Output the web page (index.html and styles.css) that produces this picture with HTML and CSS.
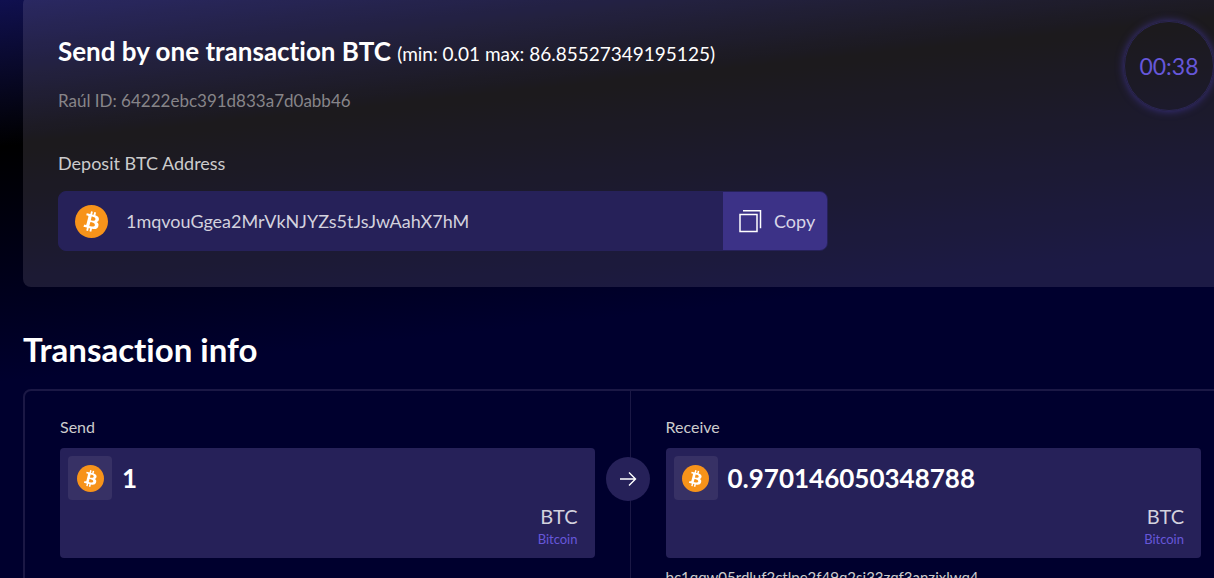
FILE: index.html
```html
<!DOCTYPE html>
<html lang="en">
<head>
  <meta charset="UTF-8">
  <meta name="viewport" content="width=device-width, initial-scale=1.0">
  <title>Send BTC</title>
  <link rel="stylesheet" href="styles.css">
</head>
<body>
  <!-- Shared coin logo -->
  <svg class="sprite" aria-hidden="true">
    <symbol id="btc" viewBox="0 0 32 32">
      <circle cx="16" cy="16" r="16" fill="#f7931a"/>
      <path fill="#fff" d="M23.189 14.02c.314-2.096-1.283-3.223-3.465-3.975l.708-2.84-1.728-.43-.69 2.765c-.454-.114-.92-.22-1.385-.326l.695-2.783L15.596 6l-.708 2.839c-.376-.086-.746-.17-1.104-.26l.002-.009-2.384-.595-.46 1.846s1.283.294 1.256.312c.7.175.826.638.805 1.006l-.806 3.235c.048.012.11.03.18.057l-.183-.045-1.13 4.532c-.086.212-.303.531-.793.41.018.025-1.256-.313-1.256-.313l-.858 1.978 2.25.561c.418.105.828.215 1.231.318l-.715 2.872 1.727.43.708-2.84c.472.127.93.245 1.378.357l-.706 2.828 1.728.43.715-2.866c2.948.558 5.164.333 6.097-2.333.752-2.146-.037-3.385-1.588-4.192 1.13-.26 1.98-1.003 2.207-2.538zm-3.95 5.538c-.533 2.147-4.148.986-5.32.695l.95-3.805c1.172.293 4.929.872 4.37 3.11zm.535-5.569c-.487 1.953-3.495.96-4.47.717l.86-3.45c.975.243 4.118.696 3.61 2.733z"/>
    </symbol>
  </svg>

  <main class="page">
    <section class="card">
      <div class="card-info">
        <h1 class="title">Send by one transaction BTC <span class="limits">(min: 0.01 max: 86.85527349195125)</span></h1>
        <p class="order-id">Raúl ID: 64222ebc391d833a7d0abb46</p>
        <p class="address-label">Deposit BTC Address</p>
        <div class="address">
          <svg class="address-icon"><use href="#btc"/></svg>
          <span class="address-value">1mqvouGgea2MrVkNJYZs5tJsJwAahX7hM</span>
          <button class="copy" type="button">
            <svg class="copy-icon" viewBox="0 0 24 24" fill="none" stroke="#fff" stroke-width="1.500">
              <path d="M2 5.500h17v17H2z"/>
              <path d="M5 1.800h17.500v17.500"/>
            </svg>
            Copy
          </button>
        </div>
      </div>
      <div class="timer">00:38</div>
    </section>

    <h2 class="section-title">Transaction info</h2>

    <section class="exchange">
      <div class="side side-send">
        <h3 class="side-label">Send</h3>
        <div class="amount-box">
          <div class="amount">
            <span class="coin"><svg class="coin-icon"><use href="#btc"/></svg></span>
            1
          </div>
          <div class="currency">BTC</div>
          <div class="currency-name">Bitcoin</div>
        </div>
        <span class="arrow">
          <svg class="arrow-icon" viewBox="0 0 18 16" fill="none" stroke="#fff" stroke-width="1.4">
            <path d="M1 8h15.500M10 1.500L16.500 8L10 14.500"/>
          </svg>
        </span>
      </div>
      <div class="side side-receive">
        <h3 class="side-label">Receive</h3>
        <div class="amount-box">
          <div class="amount">
            <span class="coin"><svg class="coin-icon"><use href="#btc"/></svg></span>
            0.970146050348788
          </div>
          <div class="currency">BTC</div>
          <div class="currency-name">Bitcoin</div>
        </div>
        <p class="wallet">bc1qqw05rdluf2ctlpe2f49q2sj33zqf3anzjxlwq4</p>
      </div>
    </section>
  </main>
</body>
</html>
```
FILE: styles.css
```css
* {
  margin: 0;
  padding: 0;
  box-sizing: border-box;
}

body {
  font-family: Lato, sans-serif;
  font-variant-ligatures: none;
  color: #fff;
  background: linear-gradient(174deg, #10104f, #000 146px, #00002e 380px) #00002e;
  height: 100vh;
  overflow: hidden;
}

.sprite {
  display: none;
}

/* runs past the right edge of the window */
.page {
  margin: -4px -24px 0 23px;
}

.card {
  display: flex;
  justify-content: space-between;
  align-items: flex-start;
  padding: 24px 24px 36px 35px;
  border-radius: 8px;
  background: rgba(245, 228, 255, 0.115);
}

.card-info {
  flex: 0 1 770px;
  padding-top: 14px;
}

.title {
  font-size: 26px;
  line-height: 34px;
  font-weight: 700;
}

.limits {
  font-size: 19px;
  font-weight: 400;
}

.order-id {
  margin-top: 18px;
  font-size: 17px;
  line-height: 24px;
  color: #878589;
}

.address-label {
  margin-top: 38px;
  font-size: 18px;
  line-height: 24px;
  color: #ccc;
}

.address {
  display: flex;
  align-items: center;
  height: 60px;
  margin-top: 16px;
  border: 1px solid #262159;
  border-radius: 8px;
  background: #262159;
  overflow: hidden;
}

.address-icon {
  width: 33px;
  height: 33px;
  margin: 0 18px 0 16px;
}

.address-value {
  flex: 1;
  font-size: 18px;
  color: #d3d2de;
}

.copy {
  display: flex;
  align-items: center;
  gap: 12px;
  height: 100%;
  width: 104px;
  padding-left: 15px;
  border: none;
  background: #3c3287;
  color: #d8d6e7;
  font-family: inherit;
  font-size: 18px;
  cursor: pointer;
}

.copy-icon {
  width: 24px;
  height: 24px;
}

.timer {
  flex: none;
  width: 90px;
  height: 90px;
  margin-top: 1px;
  border: 1px solid #2b2654;
  border-radius: 50%;
  box-shadow: 0 0 8px #3c3287;
  text-align: center;
  font-size: 23px;
  line-height: 88px;
  color: #6657d9;
}

.section-title {
  margin-top: 40px;
  font-size: 33px;
  line-height: 44px;
  font-weight: 700;
}

.exchange {
  display: grid;
  grid-template-columns: 1fr 1fr;
  margin-top: 18px;
  border: 2px solid #1b1845;
  border-radius: 8px;
}

.side {
  position: relative;
  padding: 26px 35px 36px;
}

.side-send {
  border-right: 1px solid #1b1845;
}

.side-label {
  margin-bottom: 11px;
  font-size: 16px;
  line-height: 20px;
  font-weight: 400;
  color: #ccc;
}

.amount-box {
  height: 110px;
  padding: 8px 17px 8px 8px;
  border-radius: 4px;
  background: #262159;
  text-align: right;
}

.amount {
  display: flex;
  align-items: center;
  gap: 10px;
  font-size: 26px;
  font-weight: 700;
}

.coin {
  display: flex;
  width: 44px;
  height: 44px;
  border-radius: 4px;
  background: #373165;
}

.coin-icon {
  width: 27px;
  height: 27px;
  margin: auto;
}

.currency {
  margin-top: 4px;
  font-size: 20px;
  line-height: 24px;
  color: #d3d2de;
}

.currency-name {
  margin-top: 2px;
  font-size: 13px;
  line-height: 18px;
  color: #6657d9;
}

/* badge that sits on the divider */
.arrow {
  position: absolute;
  top: 66px;
  right: -20px;
  z-index: 1;
  display: flex;
  width: 44px;
  height: 44px;
  border-radius: 50%;
  background: #262159;
}

.arrow-icon {
  width: 18px;
  height: 16px;
  margin: auto;
}

.wallet {
  margin-top: 9px;
  font-size: 15px;
  line-height: 20px;
  color: #ccc;
}
```
